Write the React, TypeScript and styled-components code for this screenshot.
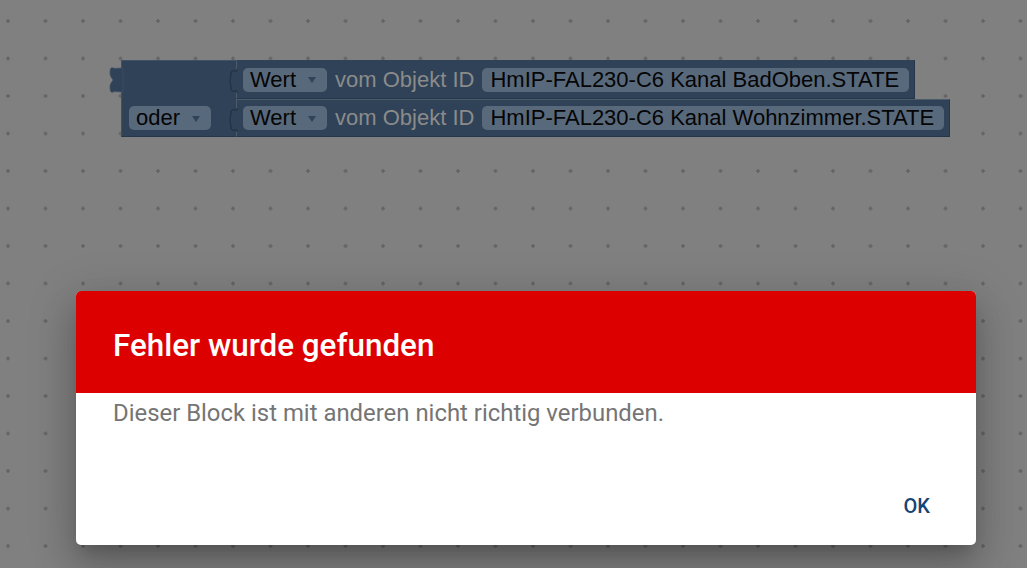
import React from "react";
import styled, { createGlobalStyle } from "styled-components";

const GlobalStyle = createGlobalStyle`
  html, body { margin: 0; padding: 0; }
  body {
    width: 1027px;
    height: 568px;
    overflow: hidden;
    font-family: Roboto, "Liberation Sans", sans-serif;
    background: #808080;
  }
`;

const Workspace = styled.div`
  position: relative;
  width: 1027px;
  height: 568px;
  overflow: hidden;
  background: #808080;
`;

const GridLayer = styled.svg`
  position: absolute;
  inset: 0;
  width: 100%;
  height: 100%;
`;

const BlockGroup = styled.div`
  position: absolute;
  left: 121px;
  top: 60px;
  display: grid;
  grid-template-columns: 115px auto;
  grid-template-rows: 39px 38px;
  justify-items: start;
  font-family: "Liberation Sans", Arial, sans-serif;
`;

const OuterCell = styled.div`
  grid-row: 1 / span 2;
  grid-column: 1;
  position: relative;
  width: 115px;
  box-sizing: border-box;
  background: #2f4257;
  border-left: 1px solid #3f5164;
  border-top: 1px solid #3f5164;
  border-bottom: 1px solid #26364a;
  display: flex;
  flex-direction: column;
  justify-content: flex-end;
  align-items: flex-start;
  padding: 0 0 6px 7px;
`;

const ValueBlock = styled.div<{ $row: number }>`
  grid-column: 2;
  grid-row: ${(p) => p.$row};
  position: relative;
  box-sizing: border-box;
  height: ${(p) => (p.$row === 1 ? 39 : 38)}px;
  display: flex;
  align-items: center;
  gap: 8px;
  padding: 0 5px 0 6px;
  background: #2f4257;
  border-left: 1px solid #4c5b6a;
  border-top: 1px solid ${(p) => (p.$row === 1 ? "#2f4257" : "#4c5b6a")};
  border-bottom: 1px solid #26364a;
  border-right: 1px solid #26364a;
`;

const Dropdown = styled.div`
  display: inline-flex;
  align-items: center;
  height: 24px;
  box-sizing: border-box;
  padding: 0 11px 0 7px;
  gap: 12px;
  border-radius: 5px;
  background: #58697c;
  color: #050505;
  font-size: 22px;
  line-height: 24px;
  white-space: nowrap;
`;

const Arrow = styled.span`
  width: 0;
  height: 0;
  border-left: 4.5px solid transparent;
  border-right: 4.5px solid transparent;
  border-top: 6px solid #2f4359;
  margin-top: 1px;
`;

const TextField = styled.div`
  display: inline-flex;
  align-items: center;
  height: 24px;
  box-sizing: border-box;
  padding: 0 10px 0 8px;
  border-radius: 5px;
  background: #58697c;
  color: #050505;
  font-size: 22px;
  line-height: 24px;
  white-space: nowrap;
`;

const Label = styled.span`
  color: #8b8b8b;
  font-size: 22px;
  line-height: 24px;
  white-space: nowrap;
`;

const Notch = styled.svg`
  position: absolute;
  left: -15px;
  top: 8px;
  width: 16px;
  height: 24px;
  overflow: visible;
`;

const OutputTab = styled.svg`
  position: absolute;
  left: -13px;
  top: 7px;
  width: 14px;
  height: 24px;
  overflow: visible;
`;

const Backdrop = styled.div`
  position: absolute;
  inset: 0;
`;

const Dialog = styled.div`
  position: absolute;
  left: 76px;
  top: 291px;
  width: 900px;
  height: 254px;
  display: flex;
  flex-direction: column;
  background: #ffffff;
  border-radius: 5px;
  overflow: hidden;
  box-shadow: 0px 11px 15px -7px rgba(0, 0, 0, 0.2),
    0px 24px 38px 3px rgba(0, 0, 0, 0.14),
    0px 9px 46px 8px rgba(0, 0, 0, 0.12);
`;

const Header = styled.div`
  height: 102px;
  box-sizing: border-box;
  background: #dd0000;
  padding: 37px 37px 0;
`;

const Title = styled.h2`
  margin: 0;
  font-family: Roboto, sans-serif;
  font-weight: 500;
  font-size: 31.4px;
  line-height: 36px;
  color: #ffffff;
`;

const Content = styled.div`
  padding: 5px 37px 0;
`;

const Message = styled.p`
  margin: 0;
  font-family: Roboto, sans-serif;
  font-size: 23.9px;
  line-height: 31px;
  color: #757575;
`;

const Actions = styled.div`
  margin-top: auto;
  display: flex;
  justify-content: flex-end;
  padding: 0 38px 15px;
`;

const Button = styled.button`
  border: none;
  background: transparent;
  padding: 6px 8px;
  font-family: Roboto, sans-serif;
  font-weight: 500;
  font-size: 20px;
  line-height: 35px;
  color: #164477;
  text-transform: uppercase;
  cursor: pointer;
`;

const notchPath =
  "M15,0 V2 C12,2 9,1 9,4 C9,8 8,10 8,12 C8,14 9,16 9,20 C9,23 12,22 15,22 V24";

function DotGrid() {
  return (
    <GridLayer>
      <defs>
        <pattern
          id="dots"
          width="37.5"
          height="37.5"
          patternUnits="userSpaceOnUse"
          x="-10.75"
          y="2.25"
        >
          <rect x="16.75" y="18" width="4" height="1.5" fill="#626262" />
          <rect x="18" y="16.75" width="1.5" height="4" fill="#626262" />
        </pattern>
      </defs>
      <rect width="100%" height="100%" fill="url(#dots)" />
    </GridLayer>
  );
}

function ValueRow({ row, name }: { row: number; name: string }) {
  return (
    <ValueBlock $row={row}>
      <Notch viewBox="0 0 16 24">
        <path d={notchPath} fill="#2f4257" stroke="#1f2d3d" strokeWidth="1" />
      </Notch>
      <Dropdown>
        Wert
        <Arrow />
      </Dropdown>
      <Label>vom Objekt ID</Label>
      <TextField>{name}</TextField>
    </ValueBlock>
  );
}

export default function App() {
  return (
    <>
      <GlobalStyle />
      <Workspace>
        <DotGrid />
        <BlockGroup>
          <OuterCell>
            <OutputTab viewBox="0 0 14 24">
              <path
                d="M14,0 V24 C10,24 6,23 4,24 C2,25 1,23 1,19 C1,15 4,13 4,12 C4,11 1,9 1,5 C1,1 2,-1 4,0 C6,1 10,0 14,0 Z"
                fill="#2f4257"
                stroke="#3d4f63"
                strokeWidth="0.8"
              />
            </OutputTab>
            <Dropdown>
              oder
              <Arrow />
            </Dropdown>
          </OuterCell>
          <ValueRow row={1} name="HmIP-FAL230-C6 Kanal BadOben.STATE" />
          <ValueRow row={2} name="HmIP-FAL230-C6 Kanal Wohnzimmer.STATE" />
        </BlockGroup>
        <Backdrop>
          <Dialog role="dialog">
            <Header>
              <Title>Fehler wurde gefunden</Title>
            </Header>
            <Content>
              <Message>Dieser Block ist mit anderen nicht richtig verbunden.</Message>
            </Content>
            <Actions>
              <Button>OK</Button>
            </Actions>
          </Dialog>
        </Backdrop>
      </Workspace>
    </>
  );
}
